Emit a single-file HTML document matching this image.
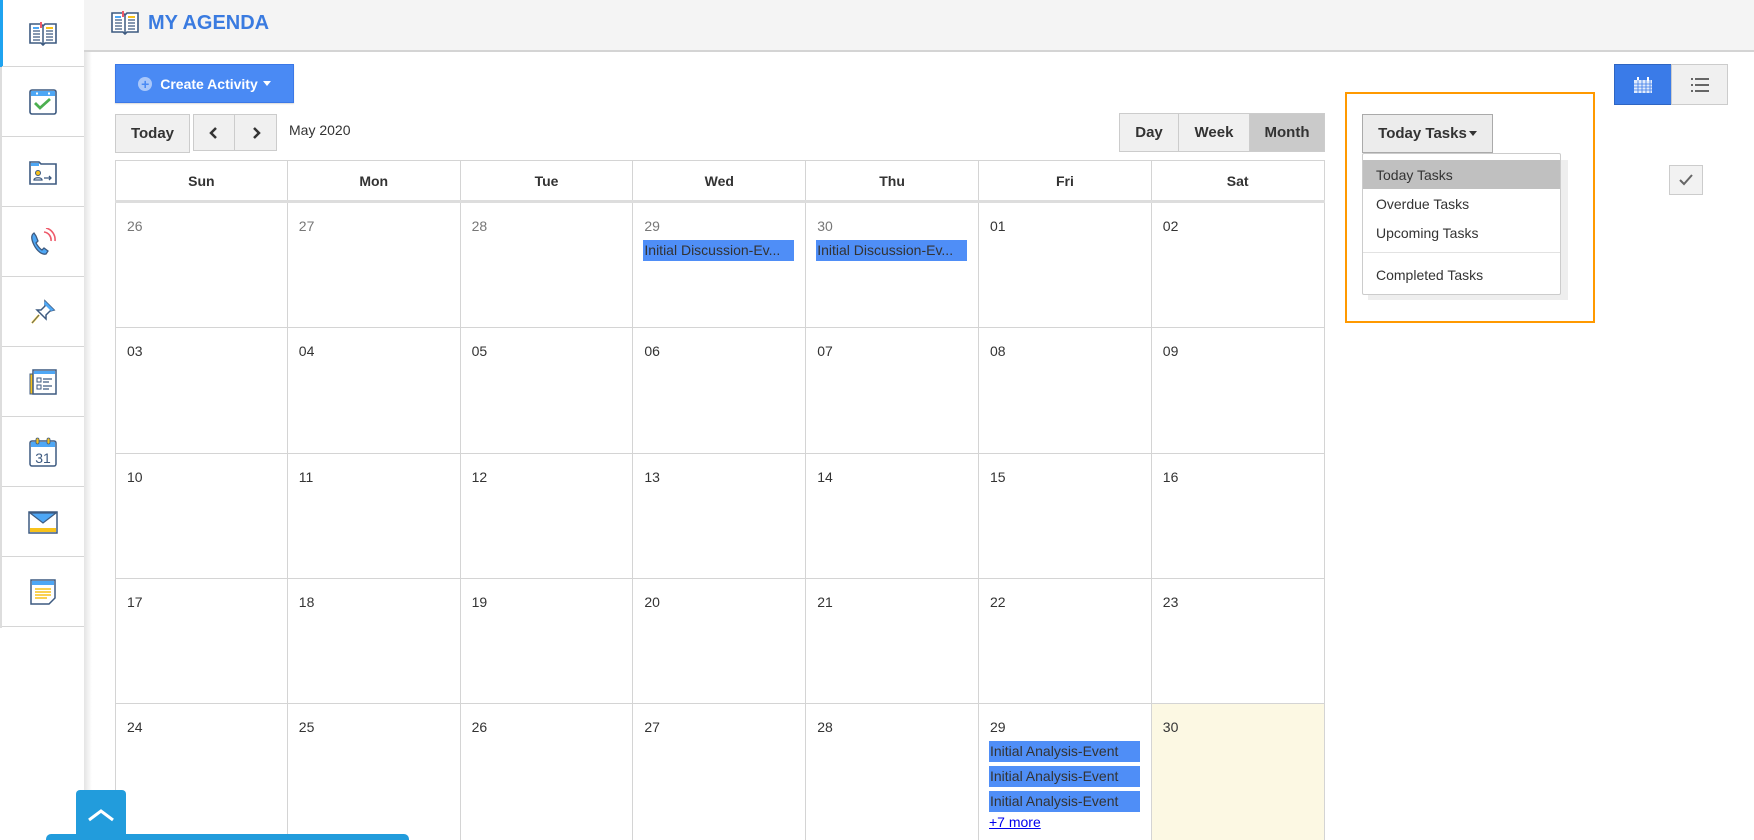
<!DOCTYPE html>
<html style="height:840px;overflow:hidden"><head><meta charset="utf-8"><style>
*{box-sizing:border-box;margin:0;padding:0}
body{width:1754px;height:840px;overflow:hidden;background:#fff;font-family:"Liberation Sans",Arial,sans-serif;position:relative;color:#333}
.a{position:absolute}
.side{left:0;top:0;width:84px;height:628px;background:#fff;border-left:2px solid #ddd}
.sideshadow{left:84px;top:0;width:8px;height:840px;background:linear-gradient(to right,#e4e4e4,#fff)}
.item{position:absolute;left:0;width:82px;height:70px;border-bottom:1px solid #d6d6d6;display:flex;align-items:center;justify-content:center}
.hdr{left:84px;top:0;width:1670px;height:52px;background:#f4f4f4;border-bottom:2px solid #d4d4d4}
.btn{position:absolute;background:#f0f0f0;border:1px solid #ccc;font-weight:bold;font-size:15px;display:flex;align-items:center;justify-content:center;color:#333}
.cal{left:115px;top:160px;width:1210px;height:680px;overflow:hidden}
.hc{position:absolute;top:0;height:41px;border:1px solid #d4d4d4;border-left:none;font-weight:bold;font-size:14px;display:flex;align-items:center;justify-content:center}
.cell{position:absolute;border-right:1px solid #d4d4d4;border-bottom:1px solid #d4d4d4;font-size:14px}
.cell .d{position:absolute;left:11px;top:15px}
.ev{position:absolute;left:10px;width:151px;height:21px;background:#4f8ef7;color:#333;font-size:14px;line-height:21px;white-space:nowrap;overflow:hidden;padding-left:1px}
.dd{font-size:14px;color:#333}
</style></head><body>

<div class="a sideshadow"></div>
<div class="a side">
 <div class="a" style="left:-2px;top:0;width:3px;height:67px;background:#1fa3f0"></div>
 <div class="item" style="top:0;height:67px"><svg width="30" height="26" viewBox="0 0 30 26"><path d="M2 4h11l2 2 2-2h11v19H17l-2 2-2-2H2z" fill="#fff" stroke="#3d5a80" stroke-width="1.6"/><line x1="15" y1="6" x2="15" y2="24" stroke="#3d5a80" stroke-width="1.5"/><path d="M5 11h7M5 14h7M5 17h7M5 20h7M18 11h7M18 14h7M18 17h7M18 20h7" stroke="#3d5a80" stroke-width="1.3"/><rect x="5" y="7" width="6" height="2" fill="#4ea7f5"/><rect x="18" y="7" width="7" height="2" fill="#f8c21a"/><rect x="12" y="2" width="2" height="6" fill="#ee5a6a"/></svg></div>
 <div class="item" style="top:67px"><svg width="28" height="28" viewBox="0 0 28 28"><rect x="1" y="2" width="26" height="24" rx="2" fill="#fff" stroke="#3d5a80" stroke-width="1.6"/><rect x="2" y="3" width="24" height="5" fill="#4ea7f5"/><rect x="7" y="4.5" width="2" height="2" fill="#fff"/><rect x="19" y="4.5" width="2" height="2" fill="#fff"/><path d="M6 15l5 5 10-9" fill="none" stroke="#4caf50" stroke-width="2.8"/></svg></div>
 <div class="item" style="top:137px"><svg width="28" height="28" viewBox="0 0 28 28"><path d="M1 4h9l2 2h15v20H1z" fill="#fff" stroke="#3d5a80" stroke-width="1.6"/><rect x="2" y="5" width="8" height="3" fill="#4ea7f5"/><circle cx="9" cy="15" r="2.5" fill="#f8c21a" stroke="#3d5a80"/><path d="M5 22c0-3 8-3 8 0z" fill="none" stroke="#3d5a80" stroke-width="1.3"/><path d="M15 20h7M20 18l2 2-2 2" fill="none" stroke="#3d5a80" stroke-width="1.3"/></svg></div>
 <div class="item" style="top:207px"><svg width="28" height="28" viewBox="0 0 28 28"><path d="M5 5c-3 2-3 6 0 12s8 10 12 9l2-3-4-3-2 2c-2-1-5-5-6-7l2-2-2-5z" fill="#4ea7f5" stroke="#3d5a80" stroke-width="1.3"/><path d="M15 4a8 8 0 0 1 7 9M17 0a12 12 0 0 1 9 13" fill="none" stroke="#ee5a6a" stroke-width="1.6"/></svg></div>
 <div class="item" style="top:277px"><svg width="28" height="28" viewBox="0 0 28 28"><path d="M16 3l9 9-4 1-4 4 0 4-9-9 4 0 4-4z" fill="#fff" stroke="#3d5a80" stroke-width="1.5"/><path d="M16 3l9 9-3 1-7-7z" fill="#4ea7f5"/><path d="M10 17l-7 8" stroke="#f8c21a" stroke-width="2"/><path d="M10 17l-7 8" stroke="#3d5a80" stroke-width="0.8"/></svg></div>
 <div class="item" style="top:347px"><svg width="28" height="28" viewBox="0 0 28 28"><rect x="1" y="6" width="4" height="20" fill="#f8c21a" stroke="#3d5a80"/><rect x="4" y="2" width="23" height="24" fill="#fff" stroke="#3d5a80" stroke-width="1.5"/><rect x="5" y="3" width="21" height="3" fill="#4ea7f5"/><rect x="8" y="10" width="4" height="4" fill="none" stroke="#3d5a80"/><rect x="8" y="17" width="4" height="4" fill="none" stroke="#3d5a80"/><path d="M14 11h9M14 14h6M14 18h9M14 21h6" stroke="#3d5a80" stroke-width="1.2"/></svg></div>
 <div class="item" style="top:417px"><svg width="28" height="30" viewBox="0 0 28 30"><rect x="1" y="4" width="26" height="25" rx="2" fill="#fff" stroke="#3d5a80" stroke-width="1.5"/><rect x="2" y="5" width="24" height="5" fill="#4ea7f5"/><rect x="7" y="1" width="3" height="6" rx="1.5" fill="#f8c21a" stroke="#3d5a80" stroke-width=".8"/><rect x="18" y="1" width="3" height="6" rx="1.5" fill="#f8c21a" stroke="#3d5a80" stroke-width=".8"/><text x="14" y="26" text-anchor="middle" font-family="Liberation Sans" font-size="14" fill="#3d5a80">31</text></svg></div>
 <div class="item" style="top:487px"><svg width="30" height="26" viewBox="0 0 30 26"><rect x="1" y="3" width="28" height="21" fill="#fff" stroke="#3d5a80" stroke-width="1.5"/><path d="M2 4h26l-13 10z" fill="#4ea7f5" stroke="#3d5a80" stroke-width="1.2"/><rect x="2" y="19" width="26" height="4" fill="#f8c21a"/></svg></div>
 <div class="item" style="top:557px"><svg width="28" height="28" viewBox="0 0 28 28"><path d="M2 2h24v18l-6 6H2z" fill="#fff" stroke="#3d5a80" stroke-width="1.5"/><rect x="3" y="3" width="22" height="4" fill="#4ea7f5"/><path d="M6 11h16M6 14h16M6 17h16M6 20h12" stroke="#f8c21a" stroke-width="1.6"/></svg></div>
</div>

<div class="a hdr"></div>
<svg class="a" style="left:110px;top:9px" width="30" height="26" viewBox="0 0 30 26"><path d="M2 4h11l2 2 2-2h11v19H17l-2 2-2-2H2z" fill="#fff" stroke="#3d5a80" stroke-width="1.6"/><line x1="15" y1="6" x2="15" y2="24" stroke="#3d5a80" stroke-width="1.5"/><path d="M5 11h7M5 14h7M5 17h7M5 20h7M18 11h7M18 14h7M18 17h7M18 20h7" stroke="#3d5a80" stroke-width="1.3"/><rect x="5" y="7" width="6" height="2" fill="#4ea7f5"/><rect x="18" y="7" width="7" height="2" fill="#f8c21a"/><rect x="12" y="2" width="2" height="6" fill="#ee5a6a"/></svg>
<div class="a" style="left:148px;top:12px;font-size:20px;font-weight:bold;color:#3a7be0">MY AGENDA</div>

<div class="a" style="left:115px;top:64px;width:179px;height:39px;background:#4a8af4;border:1px solid #3b78e7;color:#fff;font-weight:bold;font-size:14px;display:flex;align-items:center;justify-content:center;box-shadow:0 1px 1px rgba(0,0,0,.15)"><span style="display:inline-block;width:14px;height:14px;border-radius:50%;background:#a9c7fa;color:#4a8af4;font-size:14px;line-height:14px;text-align:center;margin-right:8px">+</span>Create Activity <span style="margin-left:5px;border-left:4px solid transparent;border-right:4px solid transparent;border-top:5px solid #fff"></span></div>

<div class="btn" style="left:115px;top:114px;width:75px;height:39px">Today</div>
<div class="btn" style="left:193px;top:114px;width:42px;height:37px"><svg width="10" height="14"><path d="M7 2L2 7l5 5" fill="none" stroke="#333" stroke-width="2.5"/></svg></div>
<div class="btn" style="left:234px;top:114px;width:43px;height:37px"><svg width="10" height="14"><path d="M3 2l5 5-5 5" fill="none" stroke="#333" stroke-width="2.5"/></svg></div>
<div class="a" style="left:289px;top:122px;font-size:14px;color:#333">May 2020</div>

<div class="btn" style="left:1119px;top:113px;width:60px;height:39px">Day</div>
<div class="btn" style="left:1178px;top:113px;width:72px;height:39px">Week</div>
<div class="btn" style="left:1249px;top:113px;width:76px;height:39px;background:#cacaca">Month</div>

<div class="a cal" id="cal"></div>

<div class="a" style="left:1345px;top:92px;width:250px;height:231px;border:2px solid #ff9900"></div>
<div class="btn" style="left:1362px;top:114px;width:131px;height:39px;background:#ececec;border-color:#aaa">Today Tasks<span style="margin-left:2px;border-left:4px solid transparent;border-right:4px solid transparent;border-top:5px solid #333"></span></div>
<div class="a" style="left:1368px;top:160px;width:200px;height:140px;background:#eee"></div>
<div class="a" style="left:1362px;top:153px;width:199px;height:142px;background:#fff;border:1px solid #ccc;border-radius:2px">
 <div class="a dd" style="left:0;top:6px;width:197px;height:29px;background:#c0c0c0;padding:7px 13px">Today Tasks</div>
 <div class="a dd" style="left:13px;top:42px">Overdue Tasks</div>
 <div class="a dd" style="left:13px;top:71px">Upcoming Tasks</div>
 <div class="a" style="left:0;top:98px;width:197px;height:1px;background:#e2e2e2"></div>
 <div class="a dd" style="left:13px;top:113px">Completed Tasks</div>
</div>
<div class="btn" style="left:1669px;top:165px;width:34px;height:30px;background:#f2f2f2"><svg width="16" height="14"><path d="M2 7l4 4 8-9" fill="none" stroke="#666" stroke-width="2"/></svg></div>

<div class="a" style="left:1614px;top:64px;width:58px;height:41px;background:#3a7be8;border:1px solid #2e65c2;display:flex;align-items:center;justify-content:center"><svg width="18" height="16"><rect x="0" y="3" width="18" height="13" fill="#fff" opacity=".85"/><rect x="3" y="0" width="2" height="4" fill="#fff"/><rect x="13" y="0" width="2" height="4" fill="#fff"/><path d="M0 7h18M0 10h18M0 13h18M4 3v13M8 3v13M12 3v13M16 3v13" stroke="#3a7be8" stroke-width=".8"/></svg></div>
<div class="a" style="left:1671px;top:64px;width:57px;height:41px;background:#f0f0f0;border:1px solid #ccc;display:flex;align-items:center;justify-content:center"><svg width="18" height="14"><path d="M0 1h2M0 7h2M0 13h2M4 1h14M4 7h14M4 13h14" stroke="#666" stroke-width="2"/></svg></div>

<div class="a" style="left:46px;top:834px;width:363px;height:6px;background:#229cdc;border-radius:5px 5px 0 0"></div>
<div class="a" style="left:76px;top:790px;width:50px;height:50px;background:#229cdc;border-radius:4px 4px 0 0;display:flex;align-items:center;justify-content:center"><svg width="30" height="16"><path d="M3 13L15 4l12 9" fill="none" stroke="#fff" stroke-width="3"/></svg></div>

<script>
(function(){
var c=document.getElementById('cal'),h='';
var days=['Sun','Mon','Tue','Wed','Thu','Fri','Sat'],W=172.8;
for(var i=0;i<7;i++){h+='<div class="hc" style="left:'+(i*W)+'px;width:'+W+'px;'+(i==0?'border-left:1px solid #d4d4d4;':'')+'">'+days[i]+'</div>';}
h+='<div class="a" style="left:0;top:40px;width:1210px;height:3px;background:#ddd"></div>';
var d=[['26','27','28','29','30','01','02'],['03','04','05','06','07','08','09'],['10','11','12','13','14','15','16'],['17','18','19','20','21','22','23'],['24','25','26','27','28','29','30']];
for(var r=0;r<5;r++)for(var i=0;i<7;i++){
 var ty=43+r*125.3,gray=(r==0&&i<5);
 var bg=(r==4&&i==6)?'background:#fcf8e3;':'';
 h+='<div class="cell" style="left:'+(i*W)+'px;top:'+ty+'px;width:'+W+'px;height:'+(r==4?136:125.3)+'px;'+(i==0?'border-left:1px solid #d4d4d4;':'')+bg+(r==4?'border-bottom:none;':'')+'"><span class="d" style="color:'+(gray?'#777':'#333')+'">'+d[r][i]+'</span>';
 if(r==0&&(i==3||i==4))h+='<div class="ev" style="top:37px">Initial Discussion-Ev...</div>';
 if(r==4&&i==5){for(var k=0;k<3;k++)h+='<div class="ev" style="top:'+(37+k*25)+'px">Initial Analysis-Event</div>';h+='<a style="position:absolute;left:10px;top:110px;color:#00e;text-decoration:underline;font-size:14px">+7 more</a>';}
 h+='</div>';}
c.innerHTML=h;
})();
</script>
</body></html>
